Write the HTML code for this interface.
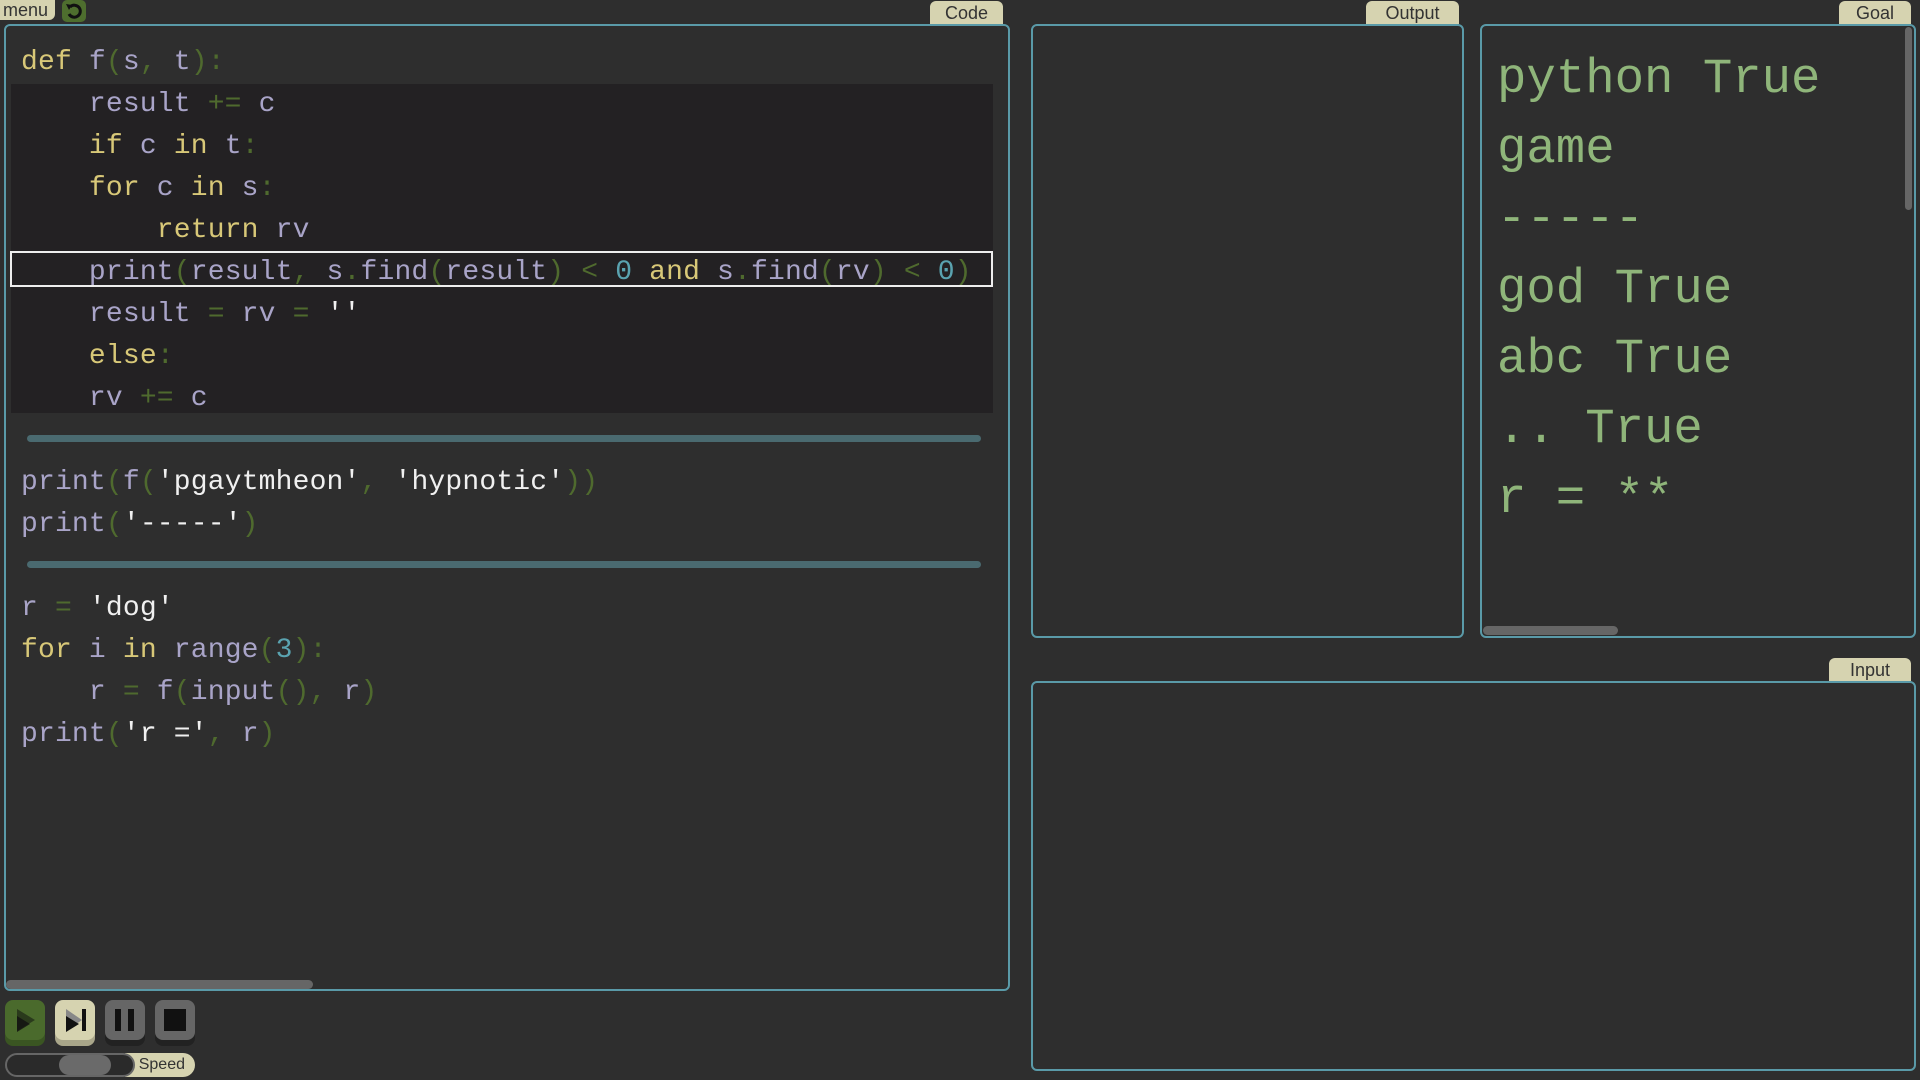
<!DOCTYPE html>
<html><head><meta charset="utf-8"><style>
body{margin:0;width:1920px;height:1080px;background:#2e2e2e;overflow:hidden;position:relative;font-family:"Liberation Mono",monospace}
.abs{position:absolute}
.panel{position:absolute;border:2px solid #5a9aa8;border-radius:6px;box-sizing:border-box;background:#2e2e2e}
.tab{position:absolute;background:#d6d3b0;color:#333;font:18px "Liberation Sans",sans-serif;text-align:center;border-radius:6px 6px 0 0;line-height:24px}
.ln{position:absolute;left:21px;font-size:28px;white-space:pre;line-height:42px;color:#a9a4c8;letter-spacing:.17px}
.k{color:#d8c878}.p{color:#4f6a2e}.n{color:#5aa3b0}.s{color:#f0f0f0}
.g{position:absolute;left:1497px;font-size:49px;white-space:pre;color:#8fb57a;line-height:70px}
.btn{position:absolute;top:1000px;width:40px;height:40px;border-radius:8px}
</style></head><body>
<div class="abs" style="left:0;top:0;width:55px;height:20px;background:#d6d3b0;border-radius:0 0 6px 0;color:#333;font:18px 'Liberation Sans',sans-serif;line-height:20px;padding-left:3px;box-sizing:border-box">menu</div>
<div class="abs" style="left:62px;top:0;width:24px;height:22px;background:#4e6e2e;border-radius:5px"><svg width="24" height="22"><path d="M8 7a6 6 0 1 1 -1 7" stroke="#111" stroke-width="3" fill="none"/><path d="M4 4l6 1-3 5z" fill="#111"/></svg></div>

<div class="tab" style="left:930px;top:1px;width:73px;height:23px">Code</div>
<div class="panel" style="left:4px;top:24px;width:1006px;height:967px"></div>
<div class="abs" style="left:11px;top:84px;width:982px;height:329px;background:#232123"></div>
<div class="abs" style="left:10px;top:251px;width:983px;height:36px;border:2px solid #eee;box-sizing:border-box"></div>
<div class="ln" style="top:42px"><span class="k">def</span> f<span class="p">(</span>s<span class="p">,</span> t<span class="p">):</span></div>
<div class="ln" style="top:84px">    result <span class="p">+=</span> c</div>
<div class="ln" style="top:126px">    <span class="k">if</span> c <span class="k">in</span> t<span class="p">:</span></div>
<div class="ln" style="top:168px">    <span class="k">for</span> c <span class="k">in</span> s<span class="p">:</span></div>
<div class="ln" style="top:210px">        <span class="k">return</span> rv</div>
<div class="ln" style="top:252px">    print<span class="p">(</span>result<span class="p">,</span> s<span class="p">.</span>find<span class="p">(</span>result<span class="p">)</span> <span class="p">&lt;</span> <span class="n">0</span> <span class="k">and</span> s<span class="p">.</span>find<span class="p">(</span>rv<span class="p">)</span> <span class="p">&lt;</span> <span class="n">0</span><span class="p">)</span></div>
<div class="ln" style="top:294px">    result <span class="p">=</span> rv <span class="p">=</span> <span class="s">''</span></div>
<div class="ln" style="top:336px">    <span class="k">else</span><span class="p">:</span></div>
<div class="ln" style="top:378px">    rv <span class="p">+=</span> c</div>
<div class="abs" style="left:27px;top:435px;width:954px;height:7px;border-radius:4px;background:#4a6a70"></div>
<div class="ln" style="top:462px">print<span class="p">(</span>f<span class="p">(</span><span class="s">'pgaytmheon'</span><span class="p">,</span> <span class="s">'hypnotic'</span><span class="p">))</span></div>
<div class="ln" style="top:504px">print<span class="p">(</span><span class="s">'-----'</span><span class="p">)</span></div>
<div class="abs" style="left:27px;top:561px;width:954px;height:7px;border-radius:4px;background:#4a6a70"></div>
<div class="ln" style="top:588px">r <span class="p">=</span> <span class="s">'dog'</span></div>
<div class="ln" style="top:630px"><span class="k">for</span> i <span class="k">in</span> range<span class="p">(</span><span class="n">3</span><span class="p">):</span></div>
<div class="ln" style="top:672px">    r <span class="p">=</span> f<span class="p">(</span>input<span class="p">(),</span> r<span class="p">)</span></div>
<div class="ln" style="top:714px">print<span class="p">(</span><span class="s">'r ='</span><span class="p">,</span> r<span class="p">)</span></div>
<div class="abs" style="left:6px;top:980px;width:307px;height:9px;border-radius:5px;background:#666"></div>

<div class="tab" style="left:1366px;top:1px;width:93px;height:23px">Output</div>
<div class="panel" style="left:1031px;top:24px;width:433px;height:614px"></div>
<div class="tab" style="left:1839px;top:1px;width:72px;height:23px">Goal</div>
<div class="panel" style="left:1480px;top:24px;width:436px;height:614px"></div>
<div class="g" style="top:44px">python True</div>
<div class="g" style="top:114px">game</div>
<div class="g" style="top:184px">-----</div>
<div class="g" style="top:254px">god True</div>
<div class="g" style="top:324px">abc True</div>
<div class="g" style="top:394px">.. True</div>
<div class="g" style="top:464px">r = **</div>
<div class="abs" style="left:1905px;top:27px;width:7px;height:183px;border-radius:4px;background:#666"></div>
<div class="abs" style="left:1483px;top:626px;width:135px;height:9px;border-radius:5px;background:#666"></div>

<div class="tab" style="left:1829px;top:658px;width:82px;height:23px">Input</div>
<div class="panel" style="left:1031px;top:681px;width:885px;height:390px"></div>

<div class="btn" style="left:5px;background:#4a6a2c;box-shadow:0 6px 0 #3a5522"><svg width="40" height="40"><path d="M12 9l18 11-18 11z" fill="#2a3a1c"/><path d="M12 16l13 8-13 8z" fill="#111" opacity=".8"/></svg></div>
<div class="btn" style="left:55px;background:#d6d3b0;box-shadow:0 6px 0 #a9a68a"><svg width="40" height="40"><path d="M11 9l16 11-16 11z" fill="#888"/><path d="M11 16l13 8-13 8z" fill="#111"/><rect x="27" y="9" width="4" height="22" fill="#111"/></svg></div>
<div class="btn" style="left:105px;background:#666;box-shadow:0 6px 0 #222"><svg width="40" height="40"><rect x="10" y="9" width="6" height="22" fill="#111"/><rect x="23" y="9" width="6" height="22" fill="#111"/></svg></div>
<div class="btn" style="left:155px;background:#666;box-shadow:0 6px 0 #222"><svg width="40" height="40"><rect x="9" y="9" width="22" height="22" fill="#111"/></svg></div>
<div class="abs" style="left:125px;top:1053px;width:70px;height:24px;background:#d6d3b0;border-radius:0 12px 12px 0;color:#333;font:16px 'Liberation Sans',sans-serif;line-height:24px;text-align:right;padding-right:10px;box-sizing:border-box">Speed</div>
<div class="abs" style="left:5px;top:1053px;width:130px;height:24px;background:#2a2a2a;border:2px solid #666;border-radius:12px;box-sizing:border-box"></div>
<div class="abs" style="left:59px;top:1055px;width:52px;height:20px;background:#6a6a6a;border-radius:10px"></div>
</body></html>
